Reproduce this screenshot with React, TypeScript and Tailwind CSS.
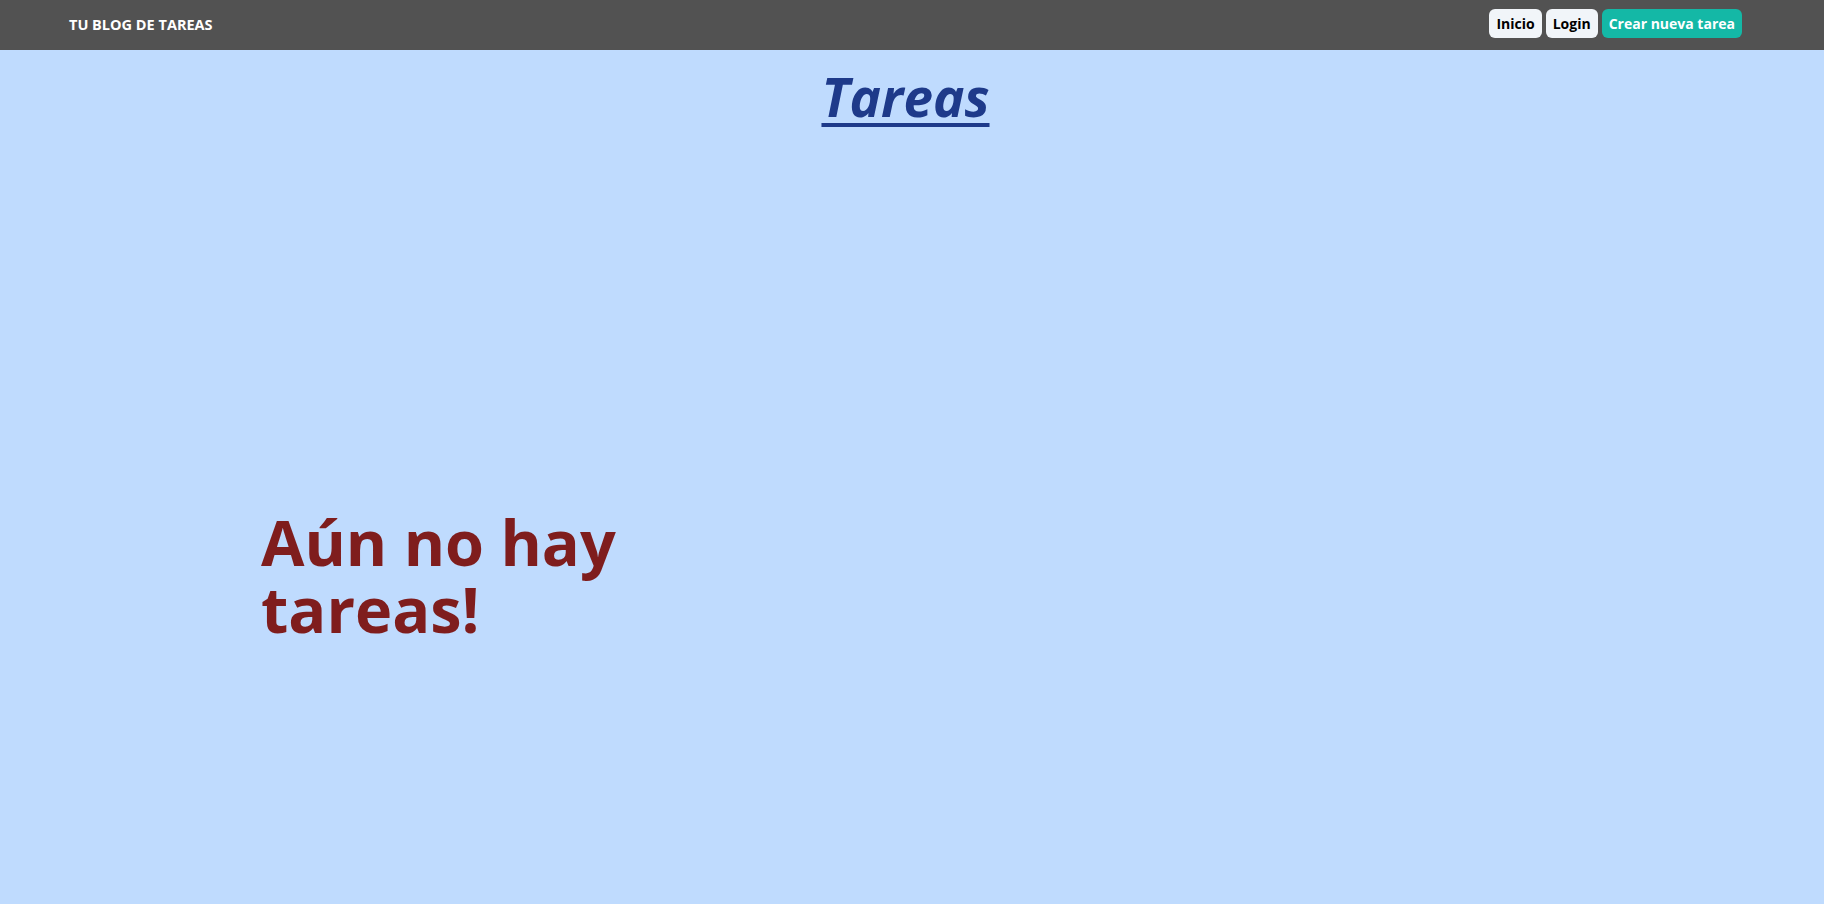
export default function App() {
	return (
		<div className="min-h-screen bg-[#bfdbfe] font-['Open_Sans','Noto_Sans',sans-serif]">
			<nav className="flex h-[50px] items-center justify-between bg-[#525252] pl-[69px] pr-[82px]">
				<span className="text-[14.5px] font-bold text-white">TU BLOG DE TAREAS</span>
				<div className="-mt-[3px] flex items-center gap-1">
					<a className="rounded-md bg-[#f1f5f9] px-[7px] py-1 text-[14px] font-bold text-black">Inicio</a>
					<a className="rounded-md bg-[#f1f5f9] px-[7px] py-1 text-[14px] font-bold text-black">Login</a>
					<a className="rounded-md bg-[#14b8a6] px-[7px] py-1 text-[14px] font-bold text-white">Crear nueva tarea</a>
				</div>
			</nav>
			<main className="pr-[13px]">
				<h1 className="mt-[14px] text-center text-[53px] font-bold italic leading-tight text-[#1e3a8a] underline decoration-[4px] underline-offset-[6px]">
					Tareas
				</h1>
				<section className="mt-[378px] pl-[261px]">
					<p className="w-[400px] text-[63px] font-bold leading-[67px] text-[#7f1d1d]">Aún no hay tareas!</p>
				</section>
			</main>
		</div>
	);
}
